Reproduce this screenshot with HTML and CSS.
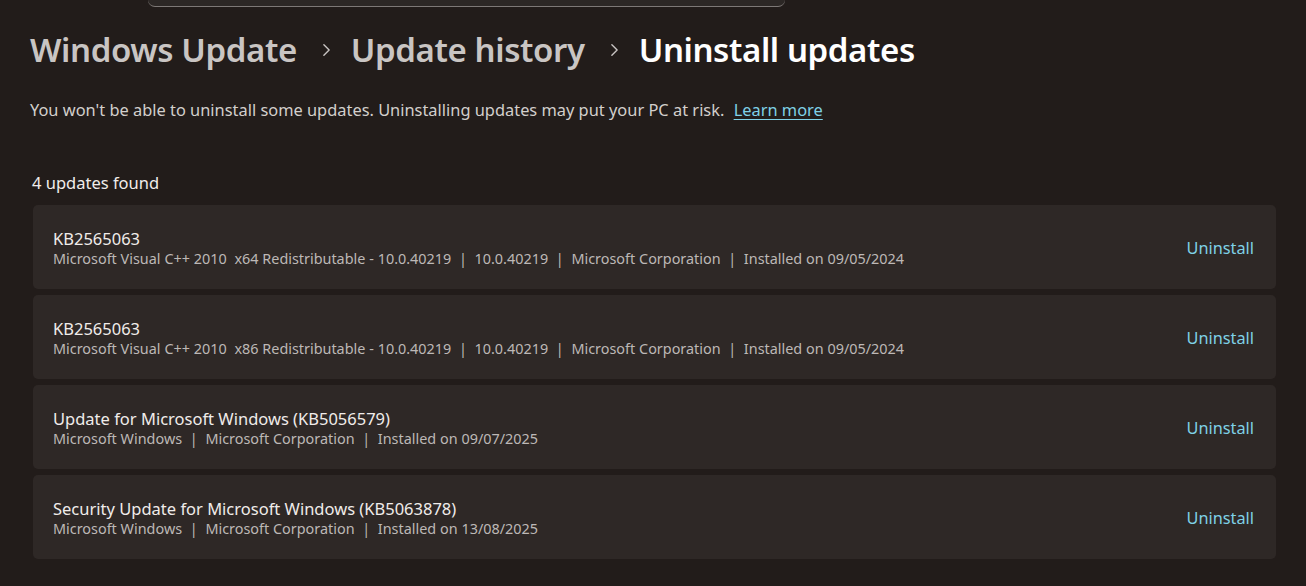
FILE: index.html
```html
<!DOCTYPE html>
<html>
<head>
<meta charset="utf-8">
<link rel="stylesheet" href="styles.css">
</head>
<body>
<div class="search-stub"></div>
<main class="page">
  <h1 class="crumbs">
    <span class="crumb">Windows Update</span>
    <svg class="chev" viewBox="0 0 10 16" width="10" height="16"><path d="M2 2 L8 8 L2 14" fill="none" stroke="currentColor" stroke-width="1.6" stroke-linecap="round" stroke-linejoin="round"/></svg>
    <span class="crumb">Update history</span>
    <svg class="chev" viewBox="0 0 10 16" width="10" height="16"><path d="M2 2 L8 8 L2 14" fill="none" stroke="currentColor" stroke-width="1.6" stroke-linecap="round" stroke-linejoin="round"/></svg>
    <span class="crumb current">Uninstall updates</span>
  </h1>
  <p class="note">You won't be able to uninstall some updates. Uninstalling updates may put your PC at risk. <a class="learn" href="#">Learn more</a></p>
  <div class="count">4 updates found</div>
  <ul class="list">
    <li class="card">
      <div class="info">
        <div class="name">KB2565063</div>
        <div class="meta">Microsoft Visual C++ 2010&nbsp; x64 Redistributable - 10.0.40219&nbsp; | &nbsp;10.0.40219&nbsp; | &nbsp;Microsoft Corporation&nbsp; | &nbsp;Installed on 09/05/2024</div>
      </div>
      <a class="action" href="#">Uninstall</a>
    </li>
    <li class="card">
      <div class="info">
        <div class="name">KB2565063</div>
        <div class="meta">Microsoft Visual C++ 2010&nbsp; x86 Redistributable - 10.0.40219&nbsp; | &nbsp;10.0.40219&nbsp; | &nbsp;Microsoft Corporation&nbsp; | &nbsp;Installed on 09/05/2024</div>
      </div>
      <a class="action" href="#">Uninstall</a>
    </li>
    <li class="card">
      <div class="info">
        <div class="name">Update for Microsoft Windows (KB5056579)</div>
        <div class="meta">Microsoft Windows&nbsp; | &nbsp;Microsoft Corporation&nbsp; | &nbsp;Installed on 09/07/2025</div>
      </div>
      <a class="action" href="#">Uninstall</a>
    </li>
    <li class="card">
      <div class="info">
        <div class="name">Security Update for Microsoft Windows (KB5063878)</div>
        <div class="meta">Microsoft Windows&nbsp; | &nbsp;Microsoft Corporation&nbsp; | &nbsp;Installed on 13/08/2025</div>
      </div>
      <a class="action" href="#">Uninstall</a>
    </li>
  </ul>
</main>
</body>
</html>
```
FILE: styles.css
```css
html, body {
  margin: 0;
  padding: 0;
  background: #221c1a;
  height: 100%;
  overflow: hidden;
}
body {
  font-family: "Noto Sans", "Open Sans", sans-serif;
  color: #e6e2e0;
}
.search-stub {
  margin-left: 148px;
  width: 637px;
  height: 7px;
  background: #2c2725;
  border-bottom: 1px solid #7d7876;
  border-radius: 0 0 8px 8px;
  box-sizing: border-box;
}
.page {
  padding-left: 30px;
}
.crumbs {
  margin: 21px 0 0 0;
  display: flex;
  align-items: center;
  gap: 18px;
  font-size: 33px;
  font-weight: 600;
  line-height: 44px;
  color: #c9c5c3;
  letter-spacing: -0.4px;
}
.crumb.current { color: #ffffff; }
.chev { color: #c9c5c3; width: 9px; height: 14px; margin: 0 2px 0 7px; }
.note {
  margin: 26px 0 0 0;
  font-size: 16.4px;
  line-height: 24px;
  color: #d3cfcc;
}
.learn {
  margin-left: 5px;
  color: #7fd1e6;
  text-decoration: underline;
  text-underline-offset: 3px;
}
.count {
  margin: 49px 0 0 2px;
  font-size: 16.5px;
  line-height: 24px;
  color: #f0ecea;
}
.list {
  list-style: none;
  margin: 10px 0 0 3px;
  padding: 0;
  width: 1243px;
  display: flex;
  flex-direction: column;
  gap: 6px;
}
.card {
  height: 84px;
  box-sizing: border-box;
  background: #2e2826;
  border-radius: 5px;
  display: flex;
  align-items: center;
  justify-content: space-between;
  padding: 2px 22px 0 20px;
}
.info { display: flex; flex-direction: column; }
.name {
  font-size: 16.5px;
  line-height: 21px;
  color: #f0ecea;
}
.meta {
  font-size: 14.4px;
  line-height: 20px;
  color: #bdb8b6;
  word-spacing: 0.1px;
}
.action {
  font-size: 16.3px;
  color: #7fd1e6;
  text-decoration: none;
}
```
